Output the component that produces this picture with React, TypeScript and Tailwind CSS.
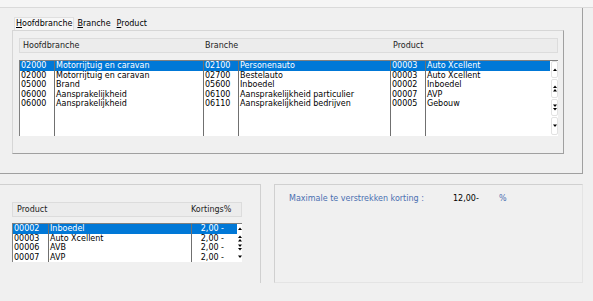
const topRows = [
  ["02000", "Motorrijtuig en caravan", "02100", "Personenauto", "00003", "Auto Xcellent"],
  ["02000", "Motorrijtuig en caravan", "02700", "Bestelauto", "00003", "Auto Xcellent"],
  ["05000", "Brand", "05600", "Inboedel", "00002", "Inboedel"],
  ["06000", "Aansprakelijkheid", "06100", "Aansprakelijkheid particulier", "00007", "AVP"],
  ["06000", "Aansprakelijkheid", "06110", "Aansprakelijkheid bedrijven", "00005", "Gebouw"],
];

const bottomRows = [
  ["00002", "Inboedel", "2,00 -"],
  ["00003", "Auto Xcellent", "2,00 -"],
  ["00006", "AVB", "2,00 -"],
  ["00007", "AVP", "2,00 -"],
];

const topCols = ["w-[34px]", "w-[149px]", "w-[35px]", "w-[152px]", "w-[35px]", "w-[125px]"];

// kind: up, pgup, pgdn, down
function Arrow({ kind }: { kind: string }) {
  const up = "M0 3 L2 0.5 L4 3 Z";
  const down = "M0 0.5 L2 3 L4 0.5 Z";
  if (kind === "up" || kind === "down") {
    return (
      <svg width="4" height="4" viewBox="0 0 4 4">
        <path d={kind === "up" ? up : down} fill="#000" />
      </svg>
    );
  }
  const d = kind === "pgup" ? up : down;
  return (
    <svg width="4" height="7" viewBox="0 0 4 7">
      <path d={d} fill="#000" />
      <path d={d} fill="#000" transform="translate(0 3.5)" />
    </svg>
  );
}

function ScrollBtn({ kind, h }: { kind: string; h: string }) {
  return (
    <div
      className={`${h} w-[7px] bg-white border border-[#e2e2e2] rounded-[2px] flex items-center justify-center`}
    >
      <Arrow kind={kind} />
    </div>
  );
}

export default function App() {
  return (
    <div
      className="w-[593px] h-[301px] bg-[#f0f0f0] overflow-hidden text-[8px] text-black"
      style={{ fontFamily: '"DejaVu Sans", Verdana, sans-serif' }}
    >
      {/* top strip */}
      <div className="h-[8px] bg-[#f5f5f5] border-b border-[#dadada]" />

      {/* OUTER PANEL */}
      <div className="w-[583px] h-[166px] border-r border-b border-[#a0a0a0] pt-[9px]">
        {/* tabs */}
        <div className="flex ml-[14px] h-[13px] items-center">
          <div className="px-[1px] h-[13px] flex items-center bg-[#f7f7f7] border-t border-l border-r border-[#e0e0e0]">
            <span><u>H</u>oofdbranche</span>
          </div>
          <div className="ml-[2px] px-[1px]"><u>B</u>ranche</div>
          <div className="ml-[4px] px-[1px]"><u>P</u>roduct</div>
        </div>

        {/* group */}
        <div className="ml-[12px] w-[552px] h-[124px] border border-[#d6d6d6] border-r-[#a0a0a0] border-b-[#a0a0a0] pt-[7px] pl-[6px]">
          <div className="w-[539px] h-[15px] bg-[#ececec] border border-[#dcdcdc] flex items-center text-[#222]">
            <div className="w-[185px] pl-[3px]">Hoofdbranche</div>
            <div className="w-[188px]">Branche</div>
            <div>Product</div>
          </div>

          <div className="mt-[7px] w-[539px] h-[76px] bg-white border-t border-l border-[#808080] flex">
            <div className="relative flex">
              {topCols.map((w, c) => (
                <div
                  key={c}
                  className={`${w} h-full ${c > 0 ? "border-l border-[#707070]" : ""}`}
                />
              ))}
              <div className="absolute inset-0">
                {topRows.map((r, i) => (
                  <div
                    key={i}
                    className={`flex h-[9.5px] leading-[9.5px] ${i === 0 ? "bg-[#0078d7] text-white" : ""}`}
                  >
                    {r.map((t, c) => (
                      <div
                        key={c}
                        className={`${topCols[c]} whitespace-nowrap overflow-hidden pl-[1px] ${c > 0 ? "border-l border-[#707070]" : ""}`}
                      >
                        {t}
                      </div>
                    ))}
                  </div>
                ))}
              </div>
            </div>
            <div className="w-[8px] flex flex-col gap-[1px] pl-[1px] pb-[1px]">
              <ScrollBtn kind="up" h="h-[17px]" />
              <ScrollBtn kind="pgup" h="h-[19px]" />
              <ScrollBtn kind="pgdn" h="h-[17px]" />
              <ScrollBtn kind="down" h="h-[18px]" />
            </div>
          </div>
        </div>
      </div>

      {/* BOTTOM PANELS */}
      <div className="flex mt-[10px]">
        <div className="w-[261px] h-[99px] border-t border-r border-[#d0d0d0] pt-[17px] pl-[12px]">
          <div className="w-[230px] h-[15px] bg-[#ececec] border border-[#dcdcdc] flex items-center text-[#222]">
            <div className="w-[178px] pl-[4px]">Product</div>
            <div>Kortings%</div>
          </div>
          <div className="mt-[6px] w-[230px] h-[39px] bg-white border-t border-l border-[#808080] flex">
            <div>
              {bottomRows.map((r, i) => (
                <div
                  key={i}
                  className={`flex h-[9.5px] leading-[9.5px] ${i === 0 ? "bg-[#0078d7] text-white" : ""}`}
                >
                  <div className="w-[35px] pl-[1px]">{r[0]}</div>
                  <div className="w-[143px] pl-[1px] border-l border-[#707070]">{r[1]}</div>
                  <div className="w-[46px] pr-[13px] text-right border-l border-[#707070]">{r[2]}</div>
                </div>
              ))}
            </div>
            <div className="w-[5px] flex flex-col items-center">
              <div className="h-[9.5px] flex items-center"><Arrow kind="up" /></div>
              <div className="h-[9.5px] flex items-center"><Arrow kind="pgup" /></div>
              <div className="h-[9.5px] flex items-center"><Arrow kind="pgdn" /></div>
              <div className="h-[9.5px] flex items-center"><Arrow kind="down" /></div>
            </div>
          </div>
        </div>

        <div className="ml-[13px] w-[309px] h-[99px] border border-[#d0d0d0] border-r-[#e4e4e4] border-b-[#e4e4e4] pt-[8px] pl-[14px] flex">
          <div className="w-[164px] text-[#4a6fb0]">Maximale te verstrekken korting :</div>
          <div className="w-[46px] text-black">12,00-</div>
          <div className="text-[#4a6fb0]">%</div>
        </div>
      </div>
    </div>
  );
}
